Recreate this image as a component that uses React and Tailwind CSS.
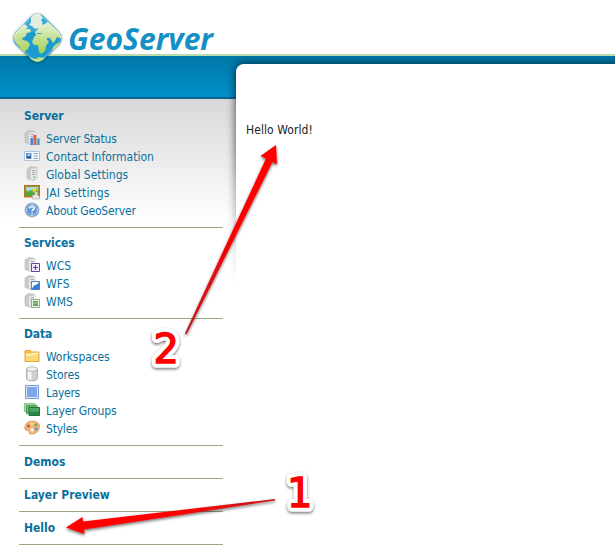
import React from 'react';

function Tower() {
  return (
    <>
      <path d="M1 3 5 .5l6 1v11l-4 2-6-2z" fill="#c9cbca" stroke="#b4b7b6" strokeWidth=".6" />
      <path d="M5 3.300v10.500l6-1.300V2z" fill="#e9eae9" />
      <path d="M6.500 4.500h3.500M6.500 6.500h3.500M6.500 8.500h3.500" stroke="#a0a3a2" strokeWidth=".9" />
    </>
  );
}

const icons = {
  status: (
    <>
      <Tower />
      <path d="M6 8h3v7H6z" fill="#4a84cf" />
      <path d="M9.300 5h3v10h-3z" fill="#e2553c" />
      <path d="M12.600 8.500h3V15h-3z" fill="#3f9fb0" />
      <path d="M6.500 14.500V8.500M9.800 14.500V5.500M13.100 14.500V9" stroke="#fff" strokeOpacity=".35" />
    </>
  ),
  contact: (
    <>
      <path d="M.5 3.500h15v9H.5z" fill="#f8fbfe" stroke="#a9c4de" />
      <path d="M2 5h5.500v5.500H2z" fill="#4f8fd0" />
      <circle cx="4.800" cy="6.900" r="1.300" fill="#e9c5a0" />
      <path d="M2.700 10.500c.3-3 4-3 4.300 0z" fill="#214f86" />
      <path d="M9.500 5.500H14M9.500 8H14M9.500 10.500H14" stroke="#7fa3c6" />
    </>
  ),
  server: (
    <>
      <path d="M3 3 7 .5l6 1v11l-4 2-6-2z" fill="#c9cbca" stroke="#b4b7b6" strokeWidth=".6" />
      <path d="M7 3.300v10.500l5.500-1.300V2z" fill="#ececec" />
      <path d="M8 4.500h3.500M8 6.500h3.500M8 8.500h3.500" stroke="#a0a3a2" strokeWidth=".9" />
      <path d="M9.500 10.500H11V12H9.500z" fill="#48b33e" />
    </>
  ),
  jai: (
    <>
      <path d="M.8 1.800h14.400v11H.8z" fill="#5fae4a" stroke="#c07420" strokeWidth="1.600" />
      <path d="M2 3h12v4L9 5 5 8 2 6z" fill="#a8dbd8" />
      <path d="m2 10 4-4 3 3 4-5v8H2z" fill="#4fa53e" />
      <path d="M8 5.500 11 4l2 2-3 3z" fill="#f2d144" />
      <path d="M8.500 11h2.500V8h2.500v3l2 1.500v2.500H8.500z" fill="#e9e6e0" stroke="#b0a89c" strokeWidth=".6" />
    </>
  ),
  about: (
    <>
      <circle cx="8" cy="8" r="7" fill="#4379b9" stroke="#a9bdd5" />
      <circle cx="8" cy="8" r="5.500" fill="#5f97d4" stroke="#d2e4f6" strokeWidth=".9" />
      <path d="M5.900 6.400c.1-2.600 4.300-2.500 4.200-.1 0 1.400-2.100 1.600-2.100 3M8 10.800v1.300" fill="none" stroke="#fff" strokeWidth="1.600" />
    </>
  ),
  wcs: (
    <>
      <Tower />
      <path d="M7.500 6.500h8v8h-8z" fill="#f2eafb" stroke="#6547a7" />
      <path d="M11.500 8v5M9 10.500h5" stroke="#6646aa" strokeWidth="1.100" />
    </>
  ),
  wfs: (
    <>
      <Tower />
      <path d="M7.500 6.500h8v8h-8z" fill="#f7fbff" stroke="#587fb8" />
      <path d="m7.500 14.500 2.500-4 3-1 2.500-3v8z" fill="#3b7bdd" />
    </>
  ),
  wms: (
    <>
      <Tower />
      <path d="M7.500 6.500h8v8h-8z" fill="#e9f5e8" stroke="#94a894" />
      <path d="M9 8h5v5H9z" fill="#5da956" />
      <path d="m9 11 2-1.500 1.500 1 1.500-1" fill="none" stroke="#a9df93" />
    </>
  ),
  folder: (
    <>
      <path d="M1 2.500h5.500l1 1.500h7.500v9.500H1z" fill="#f3bf4e" stroke="#e2a83a" />
      <path d="M1.800 5h12.500v8H1.800z" fill="#fbd974" />
      <path d="M1.800 7h6l1-1.500h5.500" fill="none" stroke="#fff6c9" strokeWidth="1.300" />
    </>
  ),
  store: (
    <>
      <path d="M2.500 3v9.500c0 3 11 3 11 0V3z" fill="#cfd0cf" stroke="#a3a5a4" strokeWidth=".8" />
      <path d="M4 5v8.500l3.500.6V5.500z" fill="#f6f6f6" />
      <ellipse cx="8" cy="3" rx="5.500" ry="2.200" fill="#f3f3f3" stroke="#adaead" strokeWidth=".8" />
    </>
  ),
  layer: (
    <>
      <path d="M1.500 1.500h13v13h-13z" fill="#e3ebf8" stroke="#7898cf" />
      <path d="M3 3h10v10H3z" fill="#7da5e8" />
    </>
  ),
  group: (
    <>
      <path d="M.5 1.500H11v8H.5z" fill="#a4d9a4" stroke="#86c488" />
      <path d="M2.500 3.500H13v8H2.500z" fill="#6bb76f" stroke="#4c9d55" />
      <path d="M5 5.500h10.500v8H5z" fill="#2b8b46" stroke="#1d7437" />
      <path d="M5.500 6h9.500v3.500H5.500z" fill="#4fa867" />
    </>
  ),
  palette: (
    <>
      <path d="M2 4C5-.5 14 .5 15.300 5c1 5-3 9.500-8.300 9-3 0-1-3-3-3.500C.5 11 0 8 2 4z" fill="#f0b67c" stroke="#cf9058" strokeWidth=".8" />
      <circle cx="4.500" cy="6" r="1.600" fill="#c95b45" />
      <circle cx="8" cy="3.700" r="1.300" fill="#f8e59b" />
      <circle cx="12" cy="5" r="1.600" fill="#6fae55" />
      <circle cx="12" cy="9" r="1.500" fill="#5a8fcd" />
      <circle cx="8" cy="10" r="1.700" fill="#fbf5e5" />
    </>
  ),
};

const sections = [
  {
    title: 'Server',
    items: [
      ['status', 'Server Status', 'tracking-[-0.2px]'],
      ['contact', 'Contact Information', ''],
      ['server', 'Global Settings', ''],
      ['jai', 'JAI Settings', 'tracking-[0.2px]'],
      ['about', 'About GeoServer', 'tracking-[-0.18px]'],
    ],
  },
  {
    title: 'Services',
    items: [
      ['wcs', 'WCS', ''],
      ['wfs', 'WFS', ''],
      ['wms', 'WMS', ''],
    ],
  },
  {
    title: 'Data',
    items: [
      ['folder', 'Workspaces', 'tracking-[-0.1px]'],
      ['store', 'Stores', 'tracking-[-0.1px]'],
      ['layer', 'Layers', 'tracking-[-0.3px]'],
      ['group', 'Layer Groups', 'tracking-[-0.12px]'],
      ['palette', 'Styles', 'tracking-[-0.2px]'],
    ],
  },
];

function NavSection({ title, items }) {
  return (
    <section className="border-b border-[#98a783] pt-[6px] pb-[7px]">
      <h2 className="mb-[5px] pl-[5px] text-[12px] leading-[18px] font-bold tracking-[-0.1px]">{title}</h2>
      <ul>
        {items.map(([icon, label, tracking]) => (
          <li key={label} className="flex h-[18px] items-center pl-[5px]">
            <svg className="mb-[2px] h-4 w-4 shrink-0" viewBox="0 0 16 16">{icons[icon]}</svg>
            <a className={`ml-[6px] text-[12px] leading-[18px] ${tracking}`}>{label}</a>
          </li>
        ))}
      </ul>
    </section>
  );
}

const diamond = 'M31.500 16.200q6-4.800 12 0L59.500 32.500q4 5.500 0 11.500L43.500 59.500q-6 4.800-12 0L15.500 44q-4-6 0-11.500z';

function Globe() {
  return (
    <svg className="absolute top-[10px] left-[9px] h-[56px] w-[56px]" viewBox="9 10 56 56">
      <defs>
        <linearGradient id="land" gradientUnits="userSpaceOnUse" x1="0" y1="22" x2="0" y2="52">
          <stop stopColor="#e3efd3" />
          <stop offset="1" stopColor="#a9d35a" />
        </linearGradient>
        <clipPath id="diamond">
          <path d={diamond} />
        </clipPath>
        <filter id="globeShadow" x="-20%" y="-20%" width="140%" height="140%">
          <feDropShadow dx="0" dy=".3" stdDeviation="1.100" floodOpacity=".6" />
        </filter>
      </defs>
      <path d={diamond} fill="#1a9bd1" filter="url(#globeShadow)" />
      <g clipPath="url(#diamond)">
        <path d="M32 14l8 0 3 4-2 2 2 3-3 1-2 4-3 1-3-3-3-1 2-3 0-4z" fill="#dcebdc" />
        <path d="M12 36l5-5 6-7 3 1 2 2-2 2 4 0 1 3-4 1-2 4-3 1 1 2 4 1 3 3-2 5-3 2-1 4-3-2-1-6-4-4-2-4z" fill="url(#land)" />
        <path d="M34 37l3-3 5 0 3 2 2 4 2 1-3 5-1 5-4 3-2-2-1-7-4 0-2-3z" fill="url(#land)" />
        <path d="M35 32l3-3 0-4 3-3 2 3 5-3 12 11 2 6-5-2-2 4-2 2-3-5-3 0 0 2-4-4-2-3-3 0-2 2z" fill="url(#land)" />
        <path d="M53 47l3-3 4-2-2 5-4 4-2-1z" fill="#b3d77b" />
        <path d="M29 57l6 2 4-2 6 1-5 6h-7z" fill="#b3d77b" />
        <path d="M30 14 12 36q22-9 51 0L45 14z" fill="#fff" opacity=".13" />
      </g>
      <path d="M32 17q5.500-4 11 0L58.500 33q4 5 0 10.500L43 58.500q-5.500 4-11 0L16.500 43.500q-4-5 0-10.500z" fill="none" stroke="#fff" strokeOpacity=".3" strokeWidth="1" />
    </svg>
  );
}

function Annotations() {
  return (
    <svg className="pointer-events-none absolute inset-0 z-20 h-[547px] w-[615px]" viewBox="0 0 615 547">
      <defs>
        <filter id="markShadow" x="-30%" y="-30%" width="160%" height="160%">
          <feDropShadow dx="0" dy="1.500" stdDeviation="1.400" floodOpacity=".6" />
        </filter>
        <linearGradient id="tailUp" gradientUnits="userSpaceOnUse" x1="186" y1="334" x2="235" y2="235">
          <stop stopColor="#bd1720" />
          <stop offset="1" stopColor="#ff0000" />
        </linearGradient>
        <linearGradient id="tailLeft" gradientUnits="userSpaceOnUse" x1="275" y1="500" x2="175" y2="514">
          <stop stopColor="#c51620" />
          <stop offset="1" stopColor="#ff0000" />
        </linearGradient>
      </defs>
      <g filter="url(#markShadow)">
        <path d="M276 145l1 19.500-4.500-2.500L186.500 334.500l-1.500-1L266 158.500l-5.500-2.500z" fill="url(#tailUp)" />
        <path d="M66 527.500 82.500 517l.5 4.500L275 499v1.500L84 529.500l.5 4.500z" fill="url(#tailLeft)" />
      </g>
      <g filter="url(#markShadow)" className="font-['DejaVu_Sans'] text-[40px] [font-stretch:normal]" fill="#fff" stroke="#fff" strokeWidth="9" strokeLinejoin="round">
        <text x="153.500" y="363">2</text>
        <text x="287" y="507">1</text>
      </g>
      <g className="font-['DejaVu_Sans'] text-[40px] [font-stretch:normal]" fill="#ff0000" stroke="#ff0000" strokeWidth="1.400" aria-hidden="true">
        <text x="153.500" y="363">2</text>
        <text x="287" y="507">1</text>
      </g>
    </svg>
  );
}

export default function App() {
  return (
    <div className="relative h-[547px] w-[615px] overflow-hidden bg-white font-['DejaVu_Sans_Condensed','DejaVu_Sans',sans-serif] [font-stretch:condensed] text-[#0a709c]">
      <header className="relative z-10 h-[56px] border-b-2 border-[#b9deac]">
        <svg className="h-[54px] w-[260px] overflow-visible" viewBox="0 0 260 54" role="img" aria-label="GeoServer">
          <text x="68" y="50" textLength="145" lengthAdjust="spacingAndGlyphs" className="font-['Open_Sans'] text-[31px] font-bold italic [font-stretch:normal]" fill="#1490c5">GeoServer</text>
        </svg>
        <Globe />
      </header>
      <div className="flex h-[491px] bg-[linear-gradient(to_bottom,#0078a7_0px,#0090c8_41px,#04668f_41px,#04668f_43px,#d8d8d8_43px,#ffffff_165px)]">
        <nav className="w-[236px] shrink-0 pt-[45px] pr-[13px] pl-[19px]">
          {sections.map((section) => <NavSection key={section.title} {...section} />)}
          {['Demos', 'Layer Preview', 'Hello'].map((label) => (
            <h2 key={label} className="h-[33px] border-b border-[#98a783] pt-[7px] pl-[5px] text-[12px] leading-[18px] font-bold">{label}</h2>
          ))}
        </nav>
        <div className="relative min-w-0 flex-1 pt-2">
          <div className="absolute top-0 -left-[12px] h-[228px] w-[391px] overflow-hidden [mask-image:linear-gradient(to_bottom,black_0px,black_90px,transparent_228px)]">
            <div className="mt-2 ml-3 h-[300px] w-[400px] rounded-tl-[8px] shadow-[0_0_9px_1px_rgba(0,0,0,0.6)]" />
          </div>
          <main className="relative h-[483px] rounded-tl-[8px] bg-white pt-[57px] pl-[10px] text-[12px] leading-[18px] tracking-[0.08px] text-[#222]">
            <p>Hello World!</p>
          </main>
        </div>
      </div>
      <Annotations />
    </div>
  );
}
